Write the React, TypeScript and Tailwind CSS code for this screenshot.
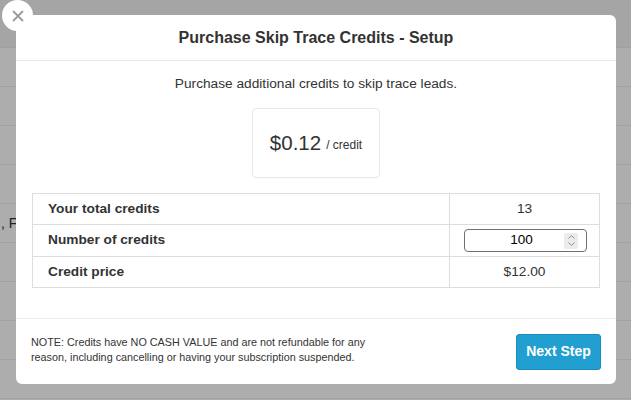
import React from 'react'

const rows = Array.from({ length: 9 })

function Backdrop() {
  return (
    <div className="absolute inset-0 bg-white">
      <div className="h-[48px] border-b border-[#eeeeee] bg-[#f4f4f4]" />
      {rows.map((_, i) => (
        <div
          key={i}
          className="flex h-[39px] items-center border-b border-[#eeeeee] text-[14px] text-[#333]"
        >
          {i === 4 && <span className="pl-[1px]">, FL 33101</span>}
        </div>
      ))}
      <div className="absolute inset-0 bg-black/[0.32]" />
    </div>
  )
}

function CloseButton() {
  return (
    <button
      aria-label="Close"
      className="absolute left-[2px] top-0 z-20 flex h-[31px] w-[31px] items-center justify-center rounded-full bg-white"
    >
      <svg width="12" height="12" viewBox="0 0 12 12" fill="none">
        <path d="M1.5 1.5l9 9M10.5 1.5l-9 9" stroke="#9a9a9a" strokeWidth="1.8" strokeLinecap="round" />
      </svg>
    </button>
  )
}

function NumberInput() {
  return (
    <div className="ml-[2px] flex h-[23px] w-[123px] items-center rounded-[4px] border border-[#6f6f6f] bg-white pr-[8px]">
      <input
        readOnly
        value="100"
        className="w-0 flex-1 bg-transparent pl-[14px] text-center text-[13.5px] text-black outline-none"
      />
      <div className="flex h-[16px] w-[14px] flex-col items-center justify-center gap-[3px] rounded-[2px] bg-[#ececef]">
        <svg width="7" height="4" viewBox="0 0 7 4" fill="none">
          <path d="M0.5 3.5L3.5 0.6L6.5 3.5" stroke="#8d8d93" strokeWidth="1" />
        </svg>
        <svg width="7" height="4" viewBox="0 0 7 4" fill="none">
          <path d="M0.5 0.5L3.5 3.4L6.5 0.5" stroke="#8d8d93" strokeWidth="1" />
        </svg>
      </div>
    </div>
  )
}

export default function App() {
  return (
    <div className="relative h-[400px] w-[631px] overflow-hidden font-['Liberation_Sans',Arial,sans-serif]">
      <Backdrop />

      <CloseButton />

      {/* Modal */}
      <div className="absolute left-[16px] top-[15px] flex h-[369px] w-[600px] flex-col rounded-[6px] bg-white text-[#333]">
        <div className="flex h-[46px] shrink-0 items-center justify-center border-b border-[#e8e8e8]">
          <h2 className="text-[16px] font-bold text-[#333]">Purchase Skip Trace Credits - Setup</h2>
        </div>

        <div className="flex flex-col items-center px-[16px] pb-[30px] pt-[13px]">
          <p className="text-[13.7px] leading-[20px] text-[#333]">
            Purchase additional credits to skip trace leads.
          </p>

          <div className="mt-[14px] flex h-[70px] w-[128px] items-center justify-center rounded-[4px] border border-[#e6e6e6]">
            <span className="text-[20.5px] text-[#333]">$0.12</span>
            <span className="ml-[5px] mt-[4px] text-[12px] text-[#333]">/ credit</span>
          </div>

          <table className="mt-[15px] w-full border-collapse border border-[#dddddd] text-[13.7px]">
            <tbody>
              <tr className="h-[31px]">
                <td className="w-[417px] border border-[#dddddd] pl-[15px] font-bold">Your total credits</td>
                <td className="border border-[#dddddd] text-center">13</td>
              </tr>
              <tr className="h-[32px]">
                <td className="border border-[#dddddd] pl-[15px] font-bold">Number of credits</td>
                <td className="border border-[#dddddd]">
                  <div className="flex justify-center">
                    <NumberInput />
                  </div>
                </td>
              </tr>
              <tr className="h-[31px]">
                <td className="border border-[#dddddd] pl-[15px] font-bold">Credit price</td>
                <td className="border border-[#dddddd] text-center">$12.00</td>
              </tr>
            </tbody>
          </table>
        </div>

        <div className="flex flex-1 items-center justify-between border-t border-[#eeeeee] pl-[15px] pr-[15px]">
          <p className="mb-[4px] w-[350px] text-[10.8px] leading-[15px] text-[#333]">
            NOTE: Credits have NO CASH VALUE and are not refundable for any reason, including
            cancelling or having your subscription suspended.
          </p>
          <button className="h-[36px] w-[85px] rounded-[3px] border border-[#1b8cbf] bg-[#219fd0] text-[14px] font-bold text-white">
            Next Step
          </button>
        </div>
      </div>
    </div>
  )
}
